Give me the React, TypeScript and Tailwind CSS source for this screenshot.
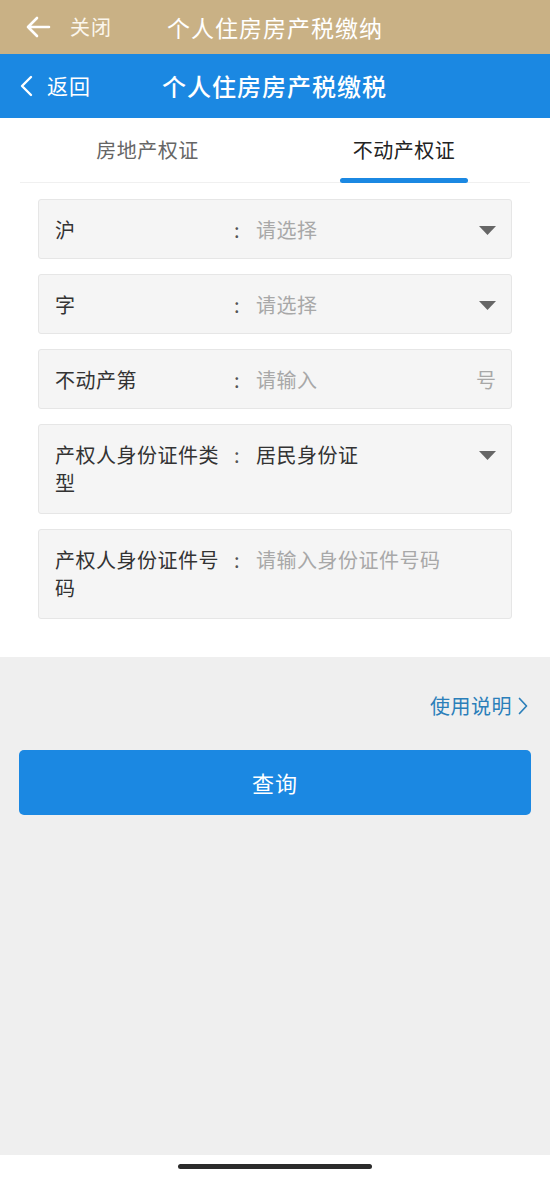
const font = "font-['Noto_Sans_CJK_SC','Noto_Sans',sans-serif]";

function Caret() {
  return (
    <svg width="17" height="9" viewBox="0 0 17 9" className="shrink-0">
      <path d="M0 0h17L8.5 9z" fill="#666" />
    </svg>
  );
}

type FieldProps = {
  label: string;
  value: string;
  placeholder?: boolean;
  right?: React.ReactNode;
  tall?: boolean;
};

function Field({ label, value, placeholder, right, tall }: FieldProps) {
  return (
    <div
      className={`flex items-start rounded-[3px] border border-[#e6e6e6] bg-[#f5f5f5] pl-[16px] pr-[15px] pt-[16px] ${
        tall ? "h-[90px]" : "h-[60px]"
      }`}
    >
      <div className="w-[179px] shrink-0 text-[20px] leading-[28px] tracking-[0.5px] text-[#333]">{label}</div>
      <div className="w-[22px] shrink-0 text-[20px] leading-[28px] text-[#555]">:</div>
      <div
        className={`flex-1 text-[20px] leading-[28px] tracking-[0.5px] ${placeholder ? "text-[#a8a8a8]" : "text-[#333]"}`}
      >
        {value}
      </div>
      <div className="flex h-[28px] items-center">{right}</div>
    </div>
  );
}

export default function App() {
  return (
    <div className={`flex min-h-[1177px] w-[550px] flex-col bg-[#efefef] ${font}`}>
      <div className="flex h-[54px] items-center bg-[#c9b185] text-white">
        <svg width="26" height="22" viewBox="0 0 26 22" className="ml-[25px]">
          <path d="M24 11H3M12 2L3 11l9 9" fill="none" stroke="#fff" strokeWidth="2.6" strokeLinecap="round" strokeLinejoin="round" />
        </svg>
        <span className="ml-[19px] text-[20px] tracking-[1px] text-[#fbf6ec]">关闭</span>
        <span className="ml-[55px] text-[23px] tracking-[1px]">个人住房房产税缴纳</span>
      </div>
      <div className="flex h-[64px] items-center bg-[#1b88e2] text-white">
        <svg width="13" height="22" viewBox="0 0 13 22" className="ml-[20px]">
          <path d="M11 2L2 11l9 9" fill="none" stroke="#fff" strokeWidth="2.4" strokeLinecap="round" strokeLinejoin="round" />
        </svg>
        <span className="ml-[14px] text-[21px] tracking-[1px]">返回</span>
        <span className="ml-[71px] text-[24px] font-medium tracking-[1px]">个人住房房产税缴税</span>
      </div>
      <div className="bg-white pb-[38px]">
        <div className="mx-[20px] flex h-[65px] border-b border-[#f0f0f0]">
          <div className="flex flex-1 items-center justify-center text-[20px] tracking-[0.5px] text-[#666]">
            房地产权证
          </div>
          <div className="relative flex flex-1 items-center justify-center text-[20px] tracking-[0.5px] text-[#222]">
            <span className="ml-[3px]">不动产权证</span>
            <div className="absolute bottom-[-1px] left-[65px] h-[5px] w-[128px] rounded-full bg-[#1b88e2]" />
          </div>
        </div>
        <div className="mx-[38px] mt-[16px] flex flex-col gap-[15px]">
          <Field label="沪" value="请选择" placeholder right={<Caret />} />
          <Field label="字" value="请选择" placeholder right={<Caret />} />
          <Field
            label="不动产第"
            value="请输入"
            placeholder
            right={<span className="text-[20px] text-[#a8a8a8]">号</span>}
          />
          <Field label="产权人身份证件类型" value="居民身份证" right={<Caret />} tall />
          <Field label="产权人身份证件号码" value="请输入身份证件号码" placeholder tall />
        </div>
      </div>
      <div className="mt-[34px] flex items-center justify-end pr-[22px] text-[20px] tracking-[0.5px] text-[#2b7fba]">
        使用说明
        <svg width="10" height="18" viewBox="0 0 10 18" className="ml-[6px]">
          <path d="M1.5 1.5L8.5 9l-7 7.5" fill="none" stroke="#2b7fba" strokeWidth="1.7" strokeLinecap="round" strokeLinejoin="round" />
        </svg>
      </div>
      <button className="mx-[19px] mt-[29px] flex h-[65px] items-center justify-center rounded-[5px] bg-[#1b88e2] text-[22px] tracking-[1px] text-white">
        查询
      </button>
      <div className="flex-1" />
      <div className="flex h-[22px] items-start justify-center bg-white pt-[9px]">
        <div className="h-[5px] w-[194px] rounded-full bg-[#2b2b2b]" />
      </div>
    </div>
  );
}
